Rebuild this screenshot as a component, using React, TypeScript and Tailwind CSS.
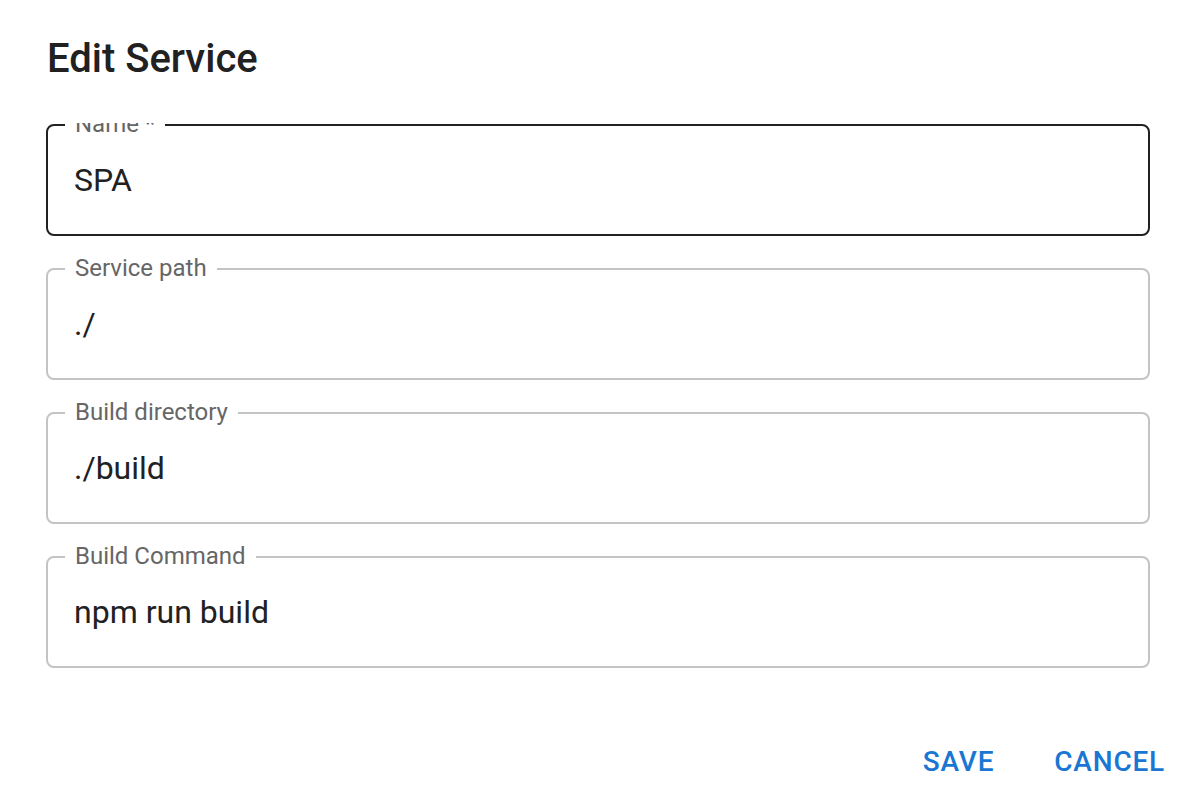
import React from "react";

const fields = [
  { label: "Name *", value: "SPA", active: true },
  { label: "Service path", value: "./" },
  { label: "Build directory", value: "./build" },
  { label: "Build Command", value: "npm run build" },
];

function Field({ label, value, active }: { label: string; value: string; active?: boolean }) {
  return (
    <div
      className={
        "relative flex h-[112px] shrink-0 items-center rounded-[8px] border-2 px-[26px] " +
        (active ? "border-[#212121]" : "border-[#c4c4c4]")
      }
    >
      {/* label sits on the top border, notch made with a white background */}
      <span className="absolute -top-[16px] left-[17px] bg-white px-[10px] text-[24px] leading-[28px] text-[#666666]">
        {label}
      </span>
      <span className="text-[32px] leading-[38px] text-[#212121]">{value}</span>
    </div>
  );
}

export default function App() {
  return (
    <div
      className="flex h-[806px] w-[1194px] flex-col bg-white"
      style={{ fontFamily: "Roboto, 'Liberation Sans', sans-serif" }}
    >
      <h2 className="h-[123px] shrink-0 pl-[47px] pt-[27px] text-[40px] font-medium leading-[64px] text-[#212121]">
        Edit Service
      </h2>

      <div className="flex h-[560px] shrink-0 flex-col gap-[32px] overflow-hidden pl-[46px] pr-[44px] pt-[1px]">
        {fields.map((f) => (
          <Field key={f.label} {...f} />
        ))}
      </div>

      <div className="flex justify-end gap-[28px] pr-[13px] pt-[47px]">
        <button className="rounded px-[16px] py-[12px] text-[28px] font-medium uppercase leading-[40px] tracking-[0.8px] text-[#1976d2]">
          Save
        </button>
        <button className="rounded px-[16px] py-[12px] text-[28px] font-medium uppercase leading-[40px] tracking-[0.8px] text-[#1976d2]">
          Cancel
        </button>
      </div>
    </div>
  );
}
